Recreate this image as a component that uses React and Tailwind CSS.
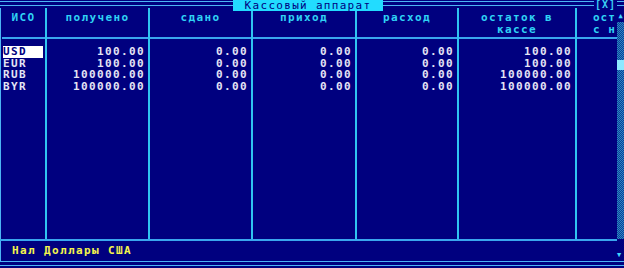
import React from "react";

const rows = [
  { iso: "USD", got: "100.00", rest: "100.00" },
  { iso: "EUR", got: "100.00", rest: "100.00" },
  { iso: "RUB", got: "100000.00", rest: "100000.00" },
  { iso: "BYR", got: "100000.00", rest: "100000.00" },
];

const mono = { fontFamily: '"DejaVu Sans Mono", "Liberation Mono", monospace' };

function Head({ lines, className = "" }) {
  return (
    <div className={"h-[31px] border-b-2 border-[#3aa6ee] pt-[4px] text-[11px] font-bold leading-[12px] tracking-[1.38px] text-[#2fd2f4] " + className}>
      {lines.map((l) => (
        <div key={l} className="whitespace-nowrap">{l}</div>
      ))}
    </div>
  );
}

function NumCol({ title, values, w }) {
  return (
    <div className={"flex flex-col border-r-2 border-[#30c4f0] " + w}>
      <Head lines={title} className="text-center" />
      <div className="flex-1 pt-[7px] pr-[3px] text-right text-[11px] font-bold leading-[11.7px] tracking-[1.38px] text-[#e4e4f4]">
        {values.map((v, i) => (
          <div key={i}>{v}</div>
        ))}
      </div>
    </div>
  );
}

export default function App() {
  return (
    <div className="relative flex h-[268px] w-[624px] flex-col overflow-hidden bg-[#00007f]" style={mono}>
      {/* top double line */}
      <div className="mt-[1px] h-[5px] border-y border-[#4cb4f4]" />
      <div className="absolute left-[233px] top-0 flex h-[11px] w-[150px] items-center justify-center bg-[#22dcff] text-[11px] leading-[11px] tracking-[1.3px] text-[#000080]">
        Кассовый аппарат
      </div>
      <div className="absolute left-[594px] top-0 h-[9px] bg-[#00007f] px-[1px] text-[10px] font-bold leading-[9px] tracking-[1px] text-[#3ad0f4]">
        [X]
      </div>

      <div className="mt-[2px] flex h-[231px] border-l border-[#4cb4f4] pl-[1px]">
        {/* ISO column */}
        <div className="flex w-[45px] flex-col border-r-2 border-[#30c4f0]">
          <Head lines={["ИСО"]} className="text-center" />
          <div className="flex-1 pt-[7px] pl-[1px] text-[11px] font-bold leading-[11.7px] tracking-[1.38px] text-[#e4e4f4]">
            {rows.map((r, i) => (
              <div key={r.iso} className={i === 0 ? "w-[40px] bg-white text-[#000080]" : ""}>
                {r.iso}
              </div>
            ))}
          </div>
        </div>
        <NumCol w="w-[103px]" title={["получено"]} values={rows.map((r) => r.got)} />
        <NumCol w="w-[103px]" title={["сдано"]} values={["0.00", "0.00", "0.00", "0.00"]} />
        <NumCol w="w-[104px]" title={["приход"]} values={["0.00", "0.00", "0.00", "0.00"]} />
        <NumCol w="w-[102px]" title={["расход"]} values={["0.00", "0.00", "0.00", "0.00"]} />
        <NumCol w="w-[118px]" title={["остаток в", "кассе"]} values={rows.map((r) => r.rest)} />
        {/* clipped last column */}
        <div className="flex w-[40px] flex-col overflow-hidden">
          <Head lines={["ост", "с н"]} className="pl-[16px] tracking-[1px]" />
          <div className="flex-1" />
        </div>
        {/* scrollbar */}
        <div className="flex w-[7px] flex-col items-center pt-[5px] text-[#40d8ff]">
          <div className="text-[7px] leading-[7px]">▲</div>
          <div className="mt-[2px] flex w-full flex-1 flex-col bg-[repeating-conic-gradient(#2a8cc0_0%_25%,#103a9a_0%_50%)] bg-[length:2px_2px]">
            <div className="mt-[38px] h-[10px] w-full bg-[#8ee8ff]" />
          </div>
        </div>
      </div>

      {/* bottom separator */}
      <div className="flex">
        <div className="h-[2px] w-[617px] bg-[#3aa6ee]" />
      </div>
      <div className="flex h-[20px] items-center border-l border-[#4cb4f4]">
        <div className="flex-1 pl-[11px] pt-[1px] text-[11px] font-bold tracking-[1.38px] text-[#f4f44c]">
          Нал Доллары США
        </div>
        <div className="w-[7px] pt-[8px] text-[7px] leading-[7px] text-[#40d8ff]">▼</div>
      </div>
      <div className="h-[5px] border-y border-[#4cb4f4]" />
    </div>
  );
}
